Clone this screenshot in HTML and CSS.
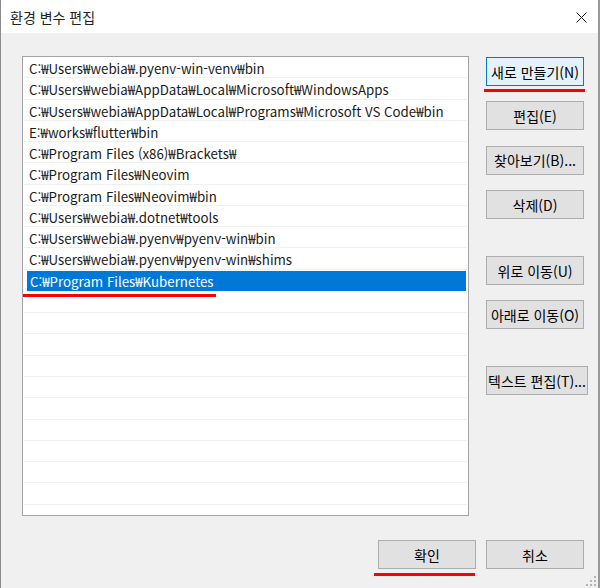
FILE: index.html
```html
<!DOCTYPE html>
<html lang="ko">
<head>
<meta charset="utf-8">
<title>환경 변수 편집</title>
<link rel="stylesheet" href="styles.css">
</head>
<body>
<div class="window">
  <div class="titlebar">
    <span class="title">환경 변수 편집</span>
    <svg class="close" width="11" height="11" viewBox="0 0 11 11"><path d="M0.5 0.5 L10.5 10.5 M10.5 0.5 L0.5 10.5" stroke="#1a1a1a" stroke-width="1" fill="none"/></svg>
  </div>
  <div class="content">
    <div class="main">
      <div class="list">
        <div class="row">C:₩Users₩webia₩.pyenv-win-venv₩bin</div>
        <div class="row">C:₩Users₩webia₩AppData₩Local₩Microsoft₩WindowsApps</div>
        <div class="row">C:₩Users₩webia₩AppData₩Local₩Programs₩Microsoft VS Code₩bin</div>
        <div class="row">E:₩works₩flutter₩bin</div>
        <div class="row">C:₩Program Files (x86)₩Brackets₩</div>
        <div class="row">C:₩Program Files₩Neovim</div>
        <div class="row">C:₩Program Files₩Neovim₩bin</div>
        <div class="row">C:₩Users₩webia₩.dotnet₩tools</div>
        <div class="row">C:₩Users₩webia₩.pyenv₩pyenv-win₩bin</div>
        <div class="row">C:₩Users₩webia₩.pyenv₩pyenv-win₩shims</div>
        <div class="row row-edit"><span class="selected">C:₩Program Files₩Kubernetes</span><span class="mark mark-row"></span></div>
        <div class="row"></div>
        <div class="row"></div>
        <div class="row"></div>
        <div class="row"></div>
        <div class="row"></div>
        <div class="row"></div>
        <div class="row"></div>
        <div class="row"></div>
        <div class="row"></div>
        <div class="row"></div>
        <div class="row"></div>
      </div>
      <div class="actions">
        <button class="btn btn-default">새로 만들기(N)<span class="mark mark-new"></span></button>
        <button class="btn">편집(E)</button>
        <button class="btn">찾아보기(B)...</button>
        <button class="btn">삭제(D)</button>
        <button class="btn sep">위로 이동(U)</button>
        <button class="btn">아래로 이동(O)</button>
        <button class="btn btn-wide sep">텍스트 편집(T)...</button>
      </div>
    </div>
    <div class="footer">
      <button class="btn">확인<span class="mark mark-ok"></span></button>
      <button class="btn">취소</button>
    </div>
    <svg class="grip" width="12" height="12" viewBox="0 0 12 12">
      <rect x="8" y="0" width="2" height="2" fill="#b4b4b4"/>
      <rect x="4" y="4" width="2" height="2" fill="#b4b4b4"/>
      <rect x="8" y="4" width="2" height="2" fill="#b4b4b4"/>
      <rect x="0" y="8" width="2" height="2" fill="#b4b4b4"/>
      <rect x="4" y="8" width="2" height="2" fill="#b4b4b4"/>
      <rect x="8" y="8" width="2" height="2" fill="#b4b4b4"/>
    </svg>
  </div>
</div>
</body>
</html>
```

FILE: styles.css
```css
* { box-sizing: border-box; }
html, body { margin: 0; padding: 0; background: #f0f0f0; }
body {
  font-family: "Noto Sans CJK KR", "Noto Sans", sans-serif;
  font-size: 14px;
  color: #000;
}
.window {
  width: 600px;
  height: 588px;
  border-left: 1px solid #8c8c8c;
  border-right: 2px solid #999999;
  background: #f0f0f0;
  display: flex;
  flex-direction: column;
}
.titlebar {
  height: 33px;
  background: #fff;
  display: flex;
  align-items: center;
  justify-content: space-between;
  padding: 0 11px 0 9px;
  flex: none;
}
.title {
  font-size: 14px;
  color: #222;
  line-height: 1;
  padding-top: 1px;
}
.close { display: block; margin-top: 1px; }
.content {
  position: relative;
  flex: 1;
  padding: 23px 10px 0 21px;
}
.main {
  display: flex;
  gap: 17px;
  align-items: flex-start;
}
.list {
  position: relative;
  width: 447px;
  height: 460px;
  background: #fff;
  border: 1px solid #a3a3a8;
  padding: 0 1px;
  overflow: hidden;
}
.row {
  position: relative;
  height: 21.28px;
  border-bottom: 1px solid #f0f0f0;
  padding: 1px 0 0 5px;
  font-size: 13.3px;
  line-height: 21px;
  white-space: nowrap;
  color: #1a1a1a;
}
.row-edit { padding-left: 3px; padding-top: 0; overflow: visible; }
.selected {
  display: block;
  background: #0078d7;
  color: #fff;
  width: 439px;
  height: 20px;
  line-height: 21px;
  margin-top: 1px;
  padding-left: 3px;
}
.actions {
  width: 102px;
  display: flex;
  flex-direction: column;
  align-items: flex-start;
  gap: 15.4px;
  padding-top: 1px;
}
.btn {
  position: relative;
  width: 98px;
  height: 29px;
  background: #e1e1e1;
  border: 1px solid #adadad;
  font-family: inherit;
  font-size: 14px;
  color: #000;
  padding: 0;
  white-space: nowrap;
  line-height: 1;
}
.btn-default {
  background: #e5f1fb;
  border-color: #0078d7;
}
.btn-wide { width: 102px; }
.sep { margin-top: 21.5px; }
.footer {
  display: flex;
  justify-content: flex-end;
  gap: 10px;
  margin-top: 24px;
  padding-right: 4px;
}
.mark {
  position: absolute;
  background: #ff0000;
  height: 3px;
}
.mark-new { left: -3px; right: -2px; top: 31px; }
.mark-ok { left: -5px; right: 0; top: 32px; }
.mark-row { left: -1px; width: 193px; top: 23px; }
.grip {
  position: absolute;
  right: 0;
  bottom: 0;
}
```
